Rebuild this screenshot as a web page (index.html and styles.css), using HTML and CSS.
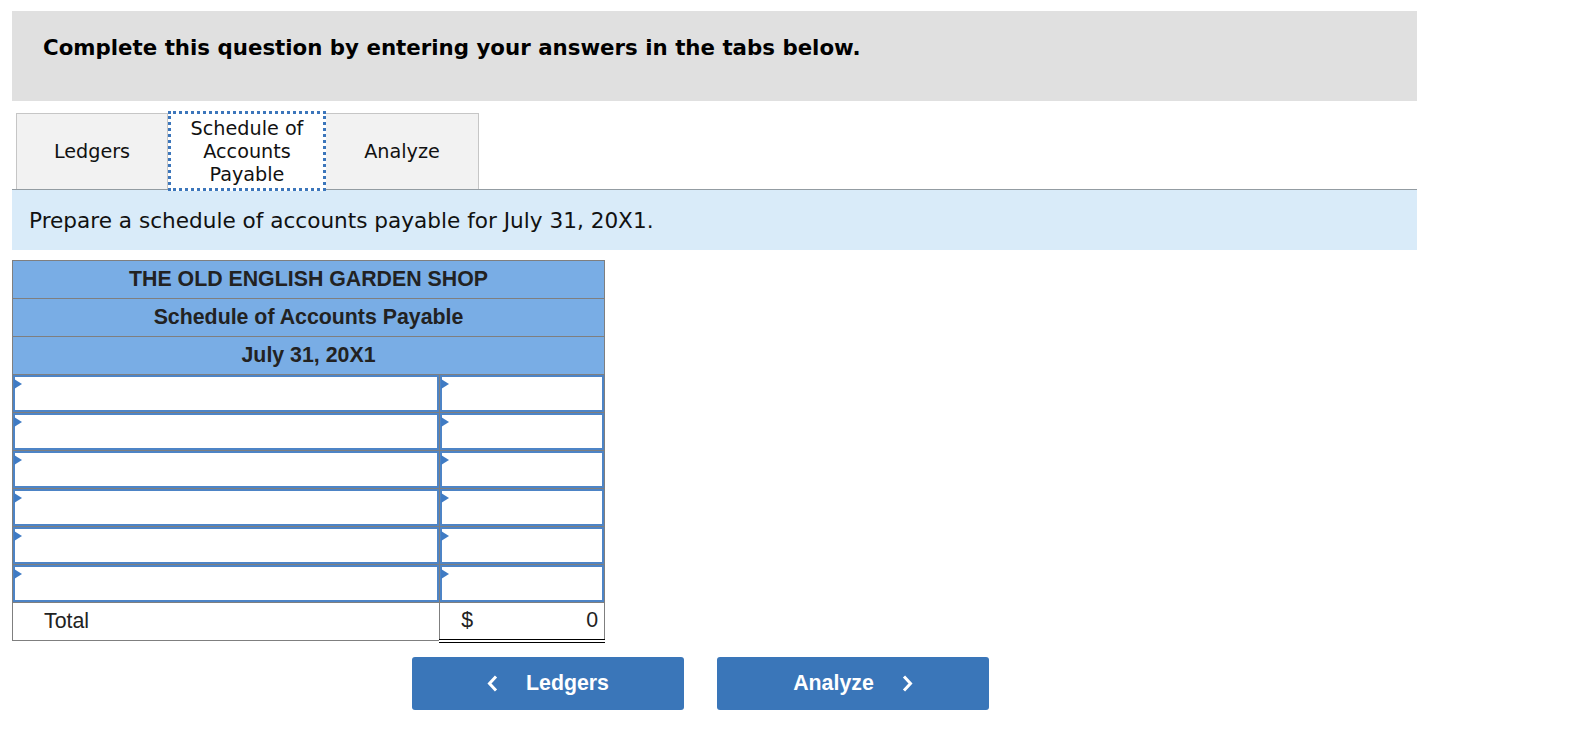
FILE: index.html
```html
<!DOCTYPE html>
<html lang="en">
<head>
<meta charset="utf-8">
<title>Schedule of Accounts Payable</title>
<link rel="stylesheet" href="styles.css">
</head>
<body>
<div class="page">
  <div class="banner">Complete this question by entering your answers in the tabs below.</div>

  <div class="tabs">
    <div class="tab">Ledgers</div>
    <div class="tab tab-active">Schedule of<br>Accounts<br>Payable</div>
    <div class="tab">Analyze</div>
  </div>

  <div class="instructions">Prepare a schedule of accounts payable for July 31, 20X1.</div>

  <table class="schedule">
    <thead>
      <tr><th colspan="2">THE OLD ENGLISH GARDEN SHOP</th></tr>
      <tr><th colspan="2">Schedule of Accounts Payable</th></tr>
      <tr><th colspan="2">July 31, 20X1</th></tr>
    </thead>
    <tbody>
      <tr><td class="c-name"><div class="field"><span class="marker"></span></div></td><td class="c-amt"><div class="field"><span class="marker"></span></div></td></tr>
      <tr><td class="c-name"><div class="field"><span class="marker"></span></div></td><td class="c-amt"><div class="field"><span class="marker"></span></div></td></tr>
      <tr><td class="c-name"><div class="field"><span class="marker"></span></div></td><td class="c-amt"><div class="field"><span class="marker"></span></div></td></tr>
      <tr><td class="c-name"><div class="field"><span class="marker"></span></div></td><td class="c-amt"><div class="field"><span class="marker"></span></div></td></tr>
      <tr><td class="c-name"><div class="field"><span class="marker"></span></div></td><td class="c-amt"><div class="field"><span class="marker"></span></div></td></tr>
      <tr><td class="c-name"><div class="field"><span class="marker"></span></div></td><td class="c-amt"><div class="field"><span class="marker"></span></div></td></tr>
      <tr class="total-row">
        <td class="total-label">Total</td>
        <td class="total-amt"><span class="cur">$</span><span class="num">0</span></td>
      </tr>
    </tbody>
  </table>

  <div class="nav">
    <button class="nav-btn">
      <svg class="chev" width="11" height="17" viewBox="0 0 11 17"><polyline points="9,1.5 2.5,8.5 9,15.5" fill="none" stroke="#fff" stroke-width="3"/></svg>
      <span>Ledgers</span>
    </button>
    <button class="nav-btn">
      <span>Analyze</span>
      <svg class="chev" width="11" height="17" viewBox="0 0 11 17"><polyline points="2,1.5 8.5,8.5 2,15.5" fill="none" stroke="#fff" stroke-width="3"/></svg>
    </button>
  </div>
</div>
</body>
</html>
```

FILE: styles.css
```css
html, body {
  margin: 0;
  padding: 0;
  background: #ffffff;
}

body {
  font-family: "DejaVu Sans", Verdana, sans-serif;
  color: #111;
}

.page {
  padding: 11px 0 0 12px;
  width: 1405px;
}

.banner {
  background: #e0e0e0;
  height: 90px;
  box-sizing: border-box;
  padding: 24px 0 0 31px;
  font-weight: bold;
  font-size: 21.33px;
  line-height: 26px;
  color: #000;
}

.tabs {
  display: flex;
  margin: 12px 0 0 4px;
  height: 76px;
}

.tab {
  box-sizing: border-box;
  height: 76px;
  border: 1px solid #c6c6c6;
  border-bottom: none;
  background: #f2f2f2;
  display: flex;
  align-items: center;
  justify-content: center;
  text-align: center;
  font-size: 19.2px;
  line-height: 23px;
  color: #111;
}

.tab:nth-child(1) { width: 152px; }
.tab:nth-child(3) { width: 153px; border-left: none; }

.tab-active {
  width: 158px;
  height: 80px;
  margin-top: -2px;
  margin-bottom: -2px;
  border: 3px dotted #3c76bb;
  background: #ffffff;
  position: relative;
  z-index: 1;
}

.instructions {
  border-top: 1px solid #939ca2;
  background: #d9ebf9;
  height: 61px;
  box-sizing: border-box;
  padding: 0 0 0 17px;
  display: flex;
  align-items: center;
  font-size: 21.6px;
  color: #111;
}

.schedule {
  margin-top: 10px;
  border-collapse: collapse;
  width: 593px;
  font-family: "Liberation Sans", Arial, sans-serif;
  font-size: 21.33px;
}

.schedule th {
  background: #79ade5;
  border: 1px solid #7f7f7f;
  height: 37px;
  padding: 0;
  font-weight: bold;
  color: #222;
  text-align: center;
  vertical-align: middle;
}

.schedule td {
  padding: 0;
  height: 37px;
  border: 1px solid #7f7f7f;
  vertical-align: top;
}

.c-name { width: 427px; }
.c-amt { width: 164px; }

.field {
  position: relative;
  box-sizing: border-box;
  height: 37px;
  border: 2px solid #4d84c6;
  background: #fff;
}

.marker {
  position: absolute;
  left: -1px;
  top: 2px;
  width: 0;
  height: 0;
  border-left: 8px solid #3f7bc4;
  border-top: 5px solid transparent;
  border-bottom: 5px solid transparent;
}

.total-row td {
  vertical-align: middle;
  color: #222;
}

.total-label {
  padding-left: 31px !important;
}

.schedule td.total-amt {
  border-top: 1px solid #000;
  border-bottom: 4px double #000;
  height: 33px;
  padding: 0 6px 0 21px;
}

.total-amt .cur {
  float: left;
}

.total-amt .num {
  float: right;
}

.nav {
  display: flex;
  gap: 33px;
  margin: 14px 0 0 400px;
}

.nav-btn {
  width: 272px;
  height: 53px;
  border: none;
  border-radius: 3px;
  background: #3a76b9;
  color: #fff;
  font-family: "Liberation Sans", Arial, sans-serif;
  font-weight: bold;
  font-size: 21.33px;
  display: flex;
  align-items: center;
  justify-content: center;
  gap: 28px;
  padding: 0;
  cursor: pointer;
}

.chev {
  display: block;
}
```
